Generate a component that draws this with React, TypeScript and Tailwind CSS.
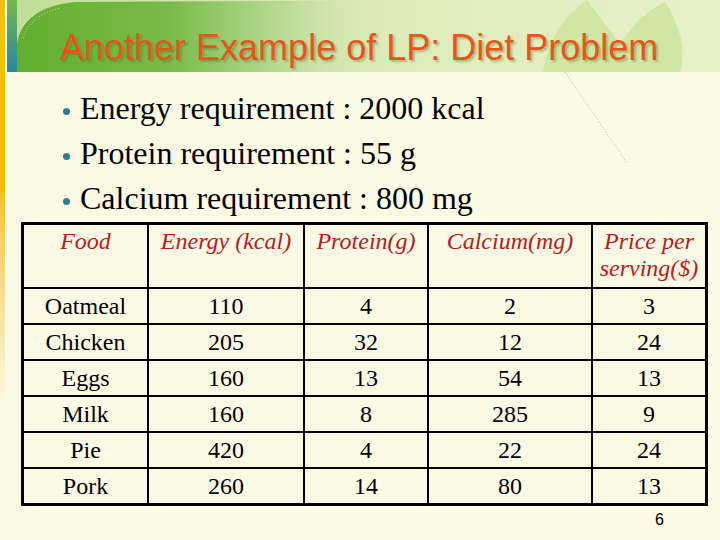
const rows = [
  ['Oatmeal', '110', '4', '2', '3'],
  ['Chicken', '205', '32', '12', '24'],
  ['Eggs', '160', '13', '54', '13'],
  ['Milk', '160', '8', '285', '9'],
  ['Pie', '420', '4', '22', '24'],
  ['Pork', '260', '14', '80', '13'],
];

const bullets = [
  'Energy requirement : 2000 kcal',
  'Protein requirement : 55 g',
  'Calcium requirement : 800 mg',
];

function HeaderArt() {
  return (
    <svg className="absolute inset-0 h-full w-full" viewBox="0 0 703 72" preserveAspectRatio="none">
      <defs>
        <linearGradient id="hbg" x1="0" y1="0" x2="1" y2="0">
          <stop offset="0" stopColor="#c2dd98" />
          <stop offset="0.4" stopColor="#dbeab6" />
          <stop offset="1" stopColor="#e7f1c8" />
        </linearGradient>
        <linearGradient id="swoosh" x1="0" y1="0" x2="1" y2="0">
          <stop offset="0" stopColor="#62ae30" />
          <stop offset="0.4" stopColor="#78bb48" />
          <stop offset="0.65" stopColor="#b0d58a" />
          <stop offset="1" stopColor="#d8eab4" stopOpacity="0" />
        </linearGradient>
      </defs>
      <rect width="703" height="72" fill="url(#hbg)" />
      <path d="M0,72 L0,44 C3,20 24,5 58,2 L380,0 L380,72 Z" fill="url(#swoosh)" />
      <path d="M6,38 C10,24 24,12 44,8" fill="none" stroke="#ffffff" strokeOpacity="0.6" strokeWidth="1" strokeDasharray="1 2" />
      <path d="M526,72 Q534,24 570,0 L603,44 Q622,14 648,2 Q672,40 663,72 Z" fill="#d1e5a4" />
    </svg>
  );
}

export default function App() {
  return (
    <div className="relative flex h-[540px] w-[720px] overflow-hidden bg-[#fbfae4] text-black [font-family:'Liberation_Serif','Times_New_Roman',serif]">
      <div className="w-[5px] shrink-0 bg-linear-to-b from-[#f2c200] from-35% to-[#fbfae4] to-75%" />
      <div className="flex flex-1 flex-col">
        <header className="flex h-[72px] bg-white">
          <div className="ml-[2px] w-[10px] bg-linear-to-b from-[#7ab84a] via-[#4c9f78] to-[#2886a6]" />
          <div className="relative flex-1">
            <HeaderArt />
            <h1 className="relative pl-[43px] pt-[30px] text-[36px] leading-none text-[#e4561b] [font-family:'Liberation_Sans',Arial,sans-serif] [text-shadow:2px_2px_2px_rgba(90,90,30,0.35)]">
              Another Example of LP: Diet Problem
            </h1>
          </div>
        </header>

        <ul className="pt-[14px] text-[32px] leading-[45px]">
          {bullets.map((b) => (
            <li key={b} className="flex items-start">
              <span className="ml-[58px] mr-[10px] mt-[22px] h-[7px] w-[7px] shrink-0 rounded-full bg-[#2a7e98]" />
              <span>{b}</span>
            </li>
          ))}
        </ul>

        <div className="ml-[16px] mt-[1px] grid w-fit grid-cols-[123px_154px_122px_162px_112px] gap-[2px] border-[3px] border-black bg-black text-[24px] leading-[27px]">
          {['Food', 'Energy (kcal)', 'Protein(g)', 'Calcium(mg)'].map((h) => (
            <div key={h} className="h-[62px] bg-[#fbfae4] pt-[3px] text-center italic text-[#c0171e]">
              {h}
            </div>
          ))}
          <div className="h-[62px] bg-[#fbfae4] pt-[3px] text-center italic text-[#c0171e]">
            Price per
            <br />
            serving($)
          </div>
          {rows.map((r) =>
            r.map((c, i) => (
              <div key={r[0] + i} className="flex h-[34px] items-center justify-center bg-[#fbfae4]">
                {c}
              </div>
            ))
          )}
        </div>

        <div className="mt-[4px] flex justify-end pr-[56px] text-[16px] leading-[20px] [font-family:'Liberation_Sans',Arial,sans-serif]">
          6
        </div>
      </div>

      <svg className="pointer-events-none absolute left-0 top-0" width="720" height="540">
        <line x1="565" y1="72" x2="627" y2="163" stroke="#b9b9a2" strokeWidth="1" strokeDasharray="1 2" />
      </svg>
    </div>
  );
}
